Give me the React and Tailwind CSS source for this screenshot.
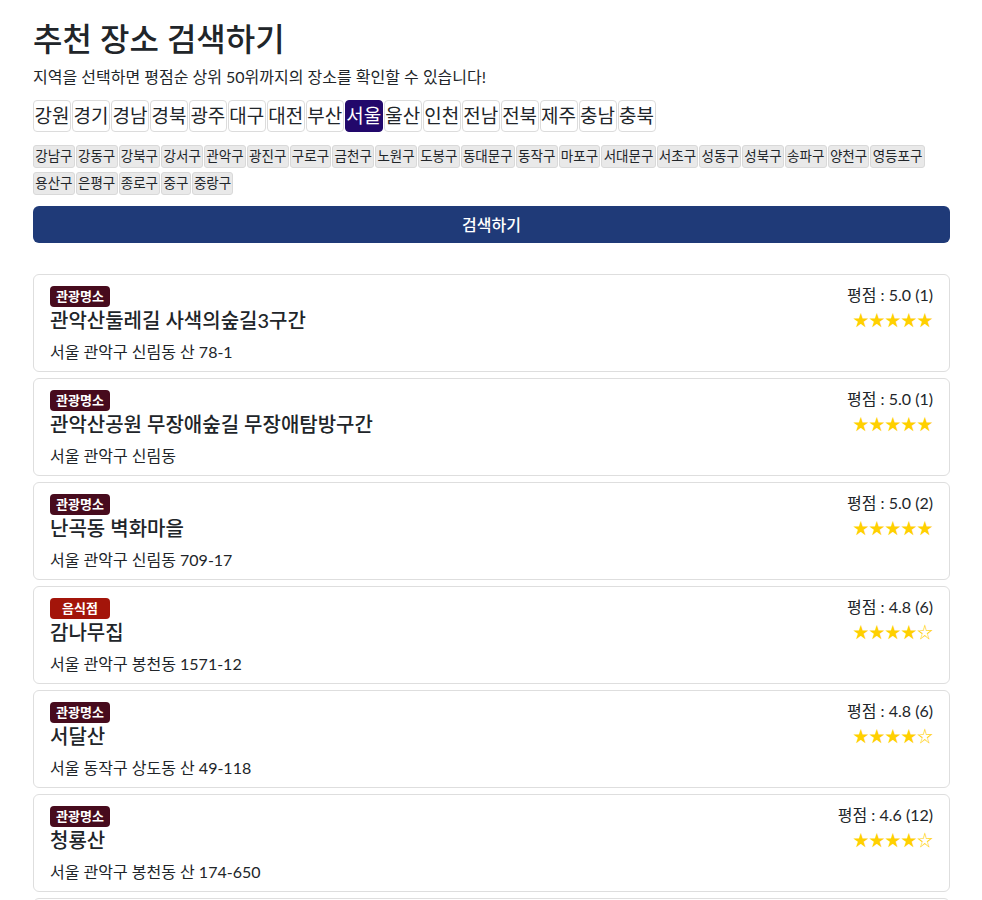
import { useState } from 'react';

const regions = ['강원', '경기', '경남', '경북', '광주', '대구', '대전', '부산', '서울', '울산', '인천', '전남', '전북', '제주', '충남', '충북'];

const districts = [
  '강남구', '강동구', '강북구', '강서구', '관악구', '광진구', '구로구', '금천구', '노원구', '도봉구', '동대문구',
  '동작구', '마포구', '서대문구', '서초구', '성동구', '성북구', '송파구', '양천구', '영등포구', '용산구', '은평구',
  '종로구', '중구', '중랑구',
];

const places = [
  { type: '관광명소', name: '관악산둘레길 사색의숲길3구간', addr: '서울 관악구 신림동 산 78-1', score: '5.0', count: 1, stars: '★★★★★' },
  { type: '관광명소', name: '관악산공원 무장애숲길 무장애탐방구간', addr: '서울 관악구 신림동', score: '5.0', count: 1, stars: '★★★★★' },
  { type: '관광명소', name: '난곡동 벽화마을', addr: '서울 관악구 신림동 709-17', score: '5.0', count: 2, stars: '★★★★★' },
  { type: '음식점', name: '감나무집', addr: '서울 관악구 봉천동 1571-12', score: '4.8', count: 6, stars: '★★★★☆' },
  { type: '관광명소', name: '서달산', addr: '서울 동작구 상도동 산 49-118', score: '4.8', count: 6, stars: '★★★★☆' },
  { type: '관광명소', name: '청룡산', addr: '서울 관악구 봉천동 산 174-650', score: '4.6', count: 12, stars: '★★★★☆' },
  { type: '관광명소', name: '관악산', addr: '서울 관악구 신림동 산 56-2', score: '4.5', count: 30, stars: '★★★★☆' },
];

const PlaceCard = ({ place }) => (
  <div className="flex justify-between rounded-md border border-[#dedede] bg-white px-4 pt-[11px] pb-[8px]">
    <div className="flex flex-col items-start">
      <span
        className={`w-[60px] rounded-[4px] text-center text-[13px] font-bold leading-[21px] text-white ${
          place.type === '음식점' ? 'bg-[#a3150a]' : 'bg-[#470b1d]'
        }`}
      >
        {place.type}
      </span>
      <h3 className="text-[20px] font-medium leading-[26px] text-[#212529]">{place.name}</h3>
      <p className="mt-[8px] text-[16px] leading-[22px] text-[#212529]">{place.addr}</p>
    </div>
    <div className="flex flex-col items-end">
      <span className="text-[16px] leading-[18px] text-[#212529]">
        평점 : {place.score} ({place.count})
      </span>
      <span className="mt-[4px] text-[16px] leading-[24px] text-[#ffd000]">{place.stars}</span>
    </div>
  </div>
);

export default function App() {
  const [region, setRegion] = useState('서울');
  const [district, setDistrict] = useState(null);

  return (
    <div className="min-h-screen bg-white pl-[33px] pr-[32px] pt-[17px] font-['Lato','Noto_Sans_CJK_KR',sans-serif] text-[#212529]">
      {/* Header */}
      <h1 className="text-[32px] font-medium leading-[44px]">추천 장소 검색하기</h1>
      <p className="mt-[4px] text-[16px] leading-[24px]">
        지역을 선택하면 평점순 상위 50위까지의 장소를 확인할 수 있습니다!
      </p>

      {/* Regions */}
      <div className="mt-[11px] flex flex-wrap gap-px">
        {regions.map((r) => (
          <button
            key={r}
            onClick={() => setRegion(r)}
            className={`h-[32px] rounded-[4px] border px-[0.5px] text-[19px] leading-[30px] ${
              region === r ? 'border-[#22086b] bg-[#22086b] text-white' : 'border-[#dcdcdc] bg-white text-[#212529]'
            }`}
          >
            {r}
          </button>
        ))}
      </div>

      {/* Districts */}
      <div className="mt-[13px] flex flex-wrap gap-x-px gap-y-[4px]">
        {districts.map((d) => (
          <button
            key={d}
            onClick={() => setDistrict(d)}
            className={`h-[23px] rounded-[3px] border border-[#d9d9d9] px-[1.25px] text-[13.5px] leading-[21px] ${
              district === d ? 'bg-[#c9c9c9]' : 'bg-[#e9e9e9]'
            } text-[#212529]`}
          >
            {d}
          </button>
        ))}
      </div>

      {/* Search */}
      <button className="mt-[11px] h-[37px] w-full rounded-md bg-[#1f3a78] text-[16px] font-medium text-white">
        검색하기
      </button>

      {/* Results */}
      <div className="mt-[31px] flex flex-col gap-[6px] pb-8">
        {places.map((p) => (
          <PlaceCard key={p.name} place={p} />
        ))}
      </div>
    </div>
  );
}
